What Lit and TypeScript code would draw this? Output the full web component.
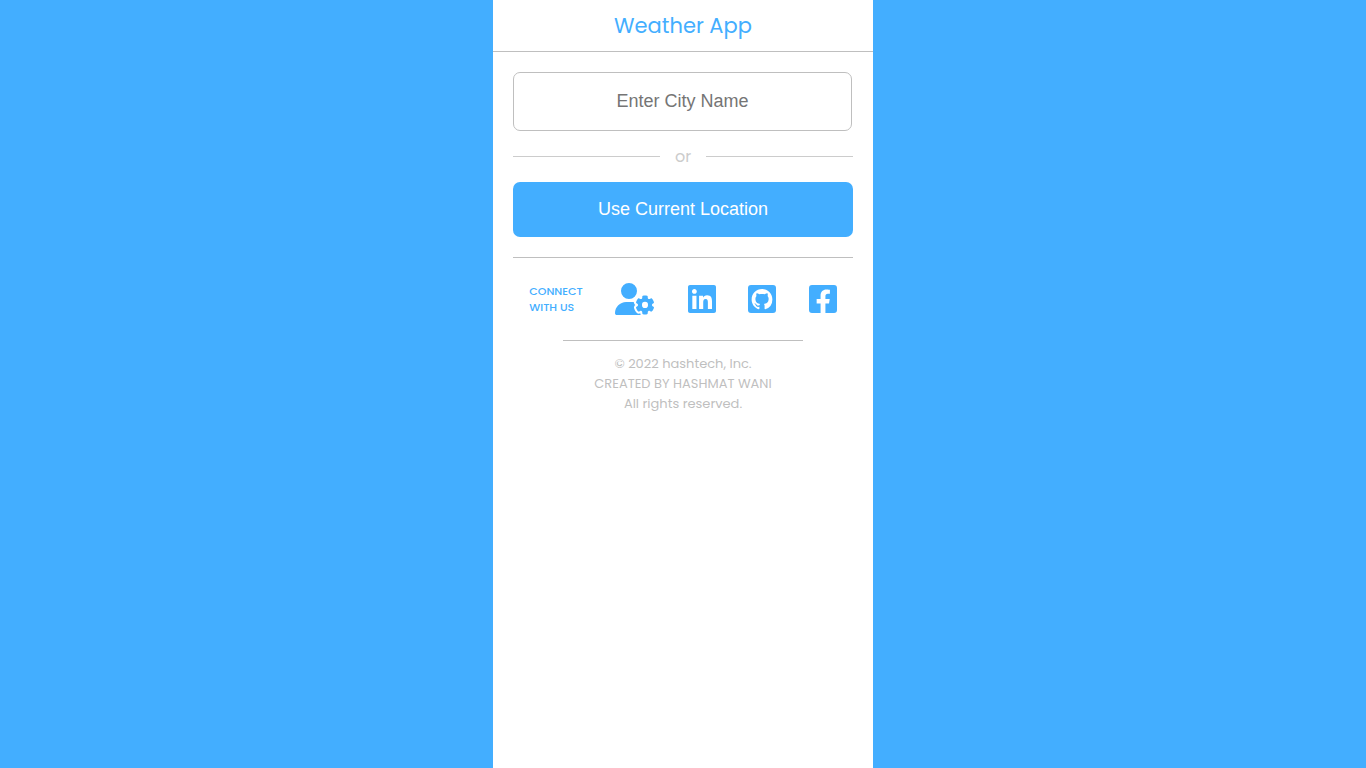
import { LitElement, html, css, svg } from "lit";
import { customElement, state } from "lit/decorators.js";

interface SocialLink {
  label: string;
  href: string;
  viewBox: string;
  wide?: boolean;
  shape: unknown;
}

const links: SocialLink[] = [
  {
    label: "Profile",
    href: "#profile",
    viewBox: "0 0 640 512",
    wide: true,
    shape: svg`<path d="M224 0a128 128 0 1 1 0 256A128 128 0 1 1 224 0zM178.3 304h91.4c11.8 0 23.4 1.2 34.5 3.3c-2.1 18.5 7.4 35.6 21.8 44.8c-16.6 10.6-26.7 31.6-20 53.3c4 12.9 9.4 25.5 16.4 37.6s15.2 23.1 24.4 33c15.7 16.9 39.6 18.4 57.2 8.7v.9c0 9.2 2.7 18.5 7.9 26.3H29.7C13.3 512 0 498.7 0 482.3C0 383.8 79.8 304 178.3 304zM436 218.2c0-7 4.5-13.3 11.3-14.8c10.5-2.4 21.5-3.7 32.7-3.7s22.2 1.3 32.7 3.7c6.8 1.5 11.3 7.8 11.3 14.8v17.7c0 7.8 4.8 14.8 11.6 18.7c6.8 3.9 15.1 4.5 21.8 .6l13.8-7.9c6.1-3.5 13.7-2.7 18.5 2.4c7.6 8.1 14.3 17.2 20.1 27.2s10.3 20.4 13.5 31c2.1 6.7-1.1 13.7-7.2 17.2l-14.4 8.3c-6.5 3.7-10 10.9-10 18.4s3.5 14.7 10 18.4l14.4 8.3c6.1 3.5 9.2 10.5 7.2 17.2c-3.3 10.6-7.8 21-13.5 31s-12.5 19.1-20.1 27.2c-4.8 5.1-12.5 5.9-18.5 2.4l-13.8-7.9c-6.7-3.9-15.1-3.3-21.8 .6c-6.8 3.9-11.6 10.9-11.6 18.7v17.7c0 7-4.5 13.3-11.3 14.8c-10.5 2.4-21.5 3.7-32.7 3.7s-22.2-1.3-32.7-3.7c-6.8-1.5-11.3-7.8-11.3-14.8V467.8c0-7.9-4.9-14.9-11.7-18.9c-6.8-3.9-15.2-4.5-22-.6l-13.5 7.8c-6.1 3.5-13.7 2.7-18.5-2.4c-7.6-8.1-14.3-17.2-20.1-27.2s-10.3-20.4-13.5-31c-2.1-6.7 1.1-13.7 7.2-17.2l14-8.1c6.5-3.8 10.1-11.1 10.1-18.6s-3.5-14.8-10.1-18.6l-14-8.1c-6.1-3.5-9.2-10.5-7.2-17.2c3.3-10.6 7.7-21 13.5-31s12.5-19.1 20.1-27.2c4.8-5.1 12.4-5.9 18.5-2.4l13.6 7.8c6.8 3.9 15.2 3.3 22-.6c6.9-3.9 11.7-11 11.7-18.9V218.2zm92.1 133.5a48.1 48.1 0 1 0-96.1 0 48.1 48.1 0 1 0 96.1 0z"></path>`,
  },
  {
    label: "LinkedIn",
    href: "#linkedin",
    viewBox: "0 0 448 512",
    shape: svg`<path d="M416 32H31.9C14.3 32 0 46.5 0 64.3v383.4C0 465.5 14.3 480 31.9 480H416c17.6 0 32-14.5 32-32.3V64.3c0-17.8-14.4-32.3-32-32.3zM135.4 416H69V202.2h66.5V416zm-33.2-243c-21.3 0-38.5-17.3-38.5-38.5S80.9 96 102.2 96c21.2 0 38.5 17.3 38.5 38.5 0 21.3-17.2 38.5-38.5 38.5zm282.1 243h-66.4V312c0-24.8-.5-56.7-34.5-56.7-34.6 0-39.9 27-39.9 54.9V416h-66.4V202.2h63.7v29.2h.9c8.9-16.8 30.6-34.5 62.9-34.5 67.2 0 79.7 44.3 79.7 101.9V416z"></path>`,
  },
  {
    label: "GitHub",
    href: "#github",
    viewBox: "0 0 448 512",
    shape: svg`<rect y="32" width="448" height="448" rx="48"></rect><path fill="#fff" transform="translate(58 96) scale(20.75)" d="M8 0C3.58 0 0 3.58 0 8c0 3.54 2.29 6.53 5.47 7.59.4.07.55-.17.55-.38 0-.19-.01-.82-.01-1.49-2.01.37-2.53-.49-2.69-.94-.09-.23-.48-.94-.82-1.13-.28-.15-.68-.52-.01-.53.63-.01 1.08.58 1.23.82.72 1.21 1.87.87 2.33.66.07-.52.28-.87.51-1.07-1.78-.2-3.64-.89-3.64-3.95 0-.87.31-1.59.82-2.15-.08-.2-.36-1.02.08-2.12 0 0 .67-.21 2.2.82.64-.18 1.32-.27 2-.27s1.36.09 2 .27c1.53-1.04 2.2-.82 2.2-.82.44 1.1.16 1.92.08 2.12.51.56.82 1.27.82 2.15 0 3.07-1.87 3.75-3.65 3.95.29.25.54.73.54 1.48 0 1.07-.01 1.93-.01 2.2 0 .21.15.46.55.38A8.01 8.01 0 0 0 16 8c0-4.42-3.58-8-8-8z"></path>`,
  },
  {
    label: "Facebook",
    href: "#facebook",
    viewBox: "0 0 448 512",
    shape: svg`<path d="M400 32H48A48 48 0 0 0 0 80v352a48 48 0 0 0 48 48h137.25V327.69h-63V256h63v-54.64c0-62.15 37-96.48 93.67-96.48 27.14 0 55.52 4.84 55.52 4.84v61h-31.27c-30.81 0-40.42 19.12-40.42 38.73V256h68.78l-11 71.69h-57.78V480H400a48 48 0 0 0 48-48V80a48 48 0 0 0-48-48z"></path>`,
  },
];

@customElement("app-root")
export class AppRoot extends LitElement {
  static styles = css`
    :host {
      --blue: #43aeff;
      --line: #bfbfbf;
      display: flex;
      justify-content: center;
      min-height: 100vh;
      background: var(--blue);
      font-family: Poppins, Inter, sans-serif;
    }
    * {
      box-sizing: border-box;
    }
    .wrapper {
      width: 100%;
      max-width: 380px;
      background: #fff;
    }
    .title {
      margin: 0;
      padding: 10px 20px;
      border-bottom: 1px solid var(--line);
      color: var(--blue);
      font-size: 21px;
      font-weight: 400;
      line-height: 31px;
      text-align: center;
    }
    .content {
      padding: 20px;
    }
    .city,
    .locate {
      display: block;
      width: 100%;
      border-radius: 7px;
      font-family: "Liberation Sans", Arial, sans-serif;
      font-size: 18px;
      text-align: center;
    }
    .city {
      width: calc(100% - 1px);
      height: 59px;
      padding: 0 15px;
      border: 1px solid var(--line);
      background: #fff;
      outline: none;
    }
    .city::placeholder {
      color: #757575;
    }
    .separator {
      display: flex;
      align-items: center;
      gap: 15px;
      height: 51px;
      color: #ccc;
      font-size: 16px;
    }
    .separator::before,
    .separator::after {
      content: "";
      flex: 1;
      height: 1px;
      background: #ccc;
    }
    .locate {
      height: 55px;
      padding: 0;
      border: none;
      background: var(--blue);
      color: #fff;
      cursor: pointer;
    }
    .connect {
      display: flex;
      align-items: center;
      justify-content: space-around;
      height: 83px;
      margin-top: 20px;
      border-top: 1px solid var(--line);
      color: var(--blue);
    }
    .heading {
      margin: 0;
      font-size: 11px;
      font-weight: 500;
      line-height: 16px;
    }
    .icon-link {
      display: flex;
      color: inherit;
    }
    .icon {
      width: 28px;
      height: 32px;
      fill: currentColor;
    }
    .icon.wide {
      width: 40px;
    }
    .legal {
      margin: 0 50px;
      padding-top: 13px;
      border-top: 1px solid var(--line);
      color: var(--line);
      font-size: 13px;
      line-height: 20px;
      text-align: center;
      white-space: nowrap;
    }
    .legal p {
      margin: 0;
    }
  `;

  @state() private city = "";

  private onInput(event: Event) {
    this.city = (event.target as HTMLInputElement).value;
  }

  render() {
    return html`
      <main class="wrapper">
        <h1 class="title">Weather App</h1>
        <div class="content">
          <input
            class="city"
            type="text"
            aria-label="City name"
            placeholder="Enter City Name"
            .value=${this.city}
            @input=${this.onInput}
          />
          <div class="separator">or</div>
          <button class="locate" type="button">Use Current Location</button>
          <nav class="connect" aria-label="Connect with us">
            <h2 class="heading">CONNECT<br />WITH US</h2>
            ${links.map(
              (link) => html`
                <a class="icon-link" href=${link.href} aria-label=${link.label}>
                  <svg class="icon ${link.wide ? "wide" : ""}" viewBox=${link.viewBox} aria-hidden="true">
                    ${link.shape}
                  </svg>
                </a>
              `
            )}
          </nav>
          <footer class="legal">
            <p>© 2022 hashtech, Inc.</p>
            <p>CREATED BY HASHMAT WANI</p>
            <p>All rights reserved.</p>
          </footer>
        </div>
      </main>
    `;
  }
}
